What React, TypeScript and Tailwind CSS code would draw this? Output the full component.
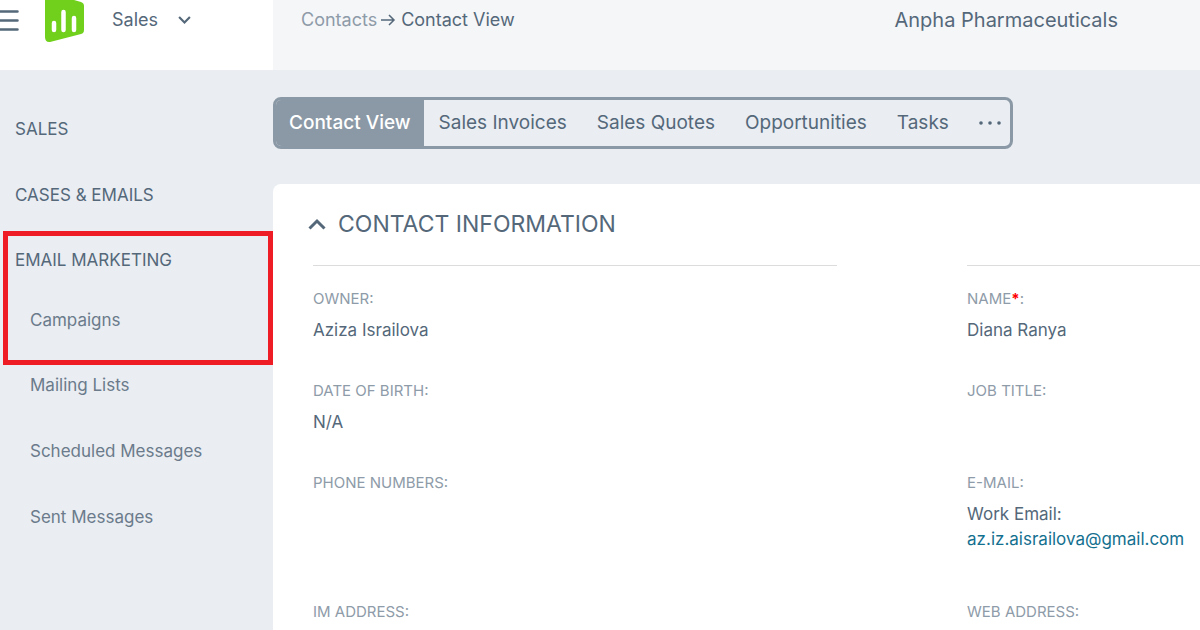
import React from 'react';

interface Field {
    label: string;
    required?: boolean;
    value?: React.ReactNode;
}

const topLinks = ['Sales', 'Cases & Emails'];
const mailLinks = ['Mailing Lists', 'Scheduled Messages', 'Sent Messages'];
const tabs = ['Sales Invoices', 'Sales Quotes', 'Opportunities', 'Tasks'];

const fields: Field[] = [
    { label: 'Owner', value: 'Aziza Israilova' },
    { label: 'Name', required: true, value: 'Diana Ranya' },
    { label: 'Date of birth', value: 'N/A' },
    { label: 'Job title' },
    { label: 'Phone numbers' },
    {
        label: 'E-mail',
        value: (
            <div className="pb-3">
                Work Email:
                <br />
                <a href="mailto:az.iz.aisrailova@gmail.com" className="text-[#14708f] hover:underline">
                    az.iz.aisrailova@gmail.com
                </a>
            </div>
        ),
    },
    { label: 'IM address' },
    { label: 'Web address' },
];

const Logo = () => (
    <svg width="39" height="42" viewBox="0 0 39 42" aria-hidden="true">
        <path
            d="M0 0H29L36 2Q39 3 39 6V30Q39 33 36 34L6 41.8Q0 43 0 37Z"
            fill="#70d01b"
        />
        <path d="M9 23V30M18.500 12V30M29 18V30" stroke="#fff" strokeWidth="4.500" strokeLinecap="round" />
    </svg>
);

const Chevron = ({ className, width }: { className?: string; width: number }) => (
    <svg
        width={width}
        viewBox="0 0 18 12"
        fill="none"
        stroke="currentColor"
        strokeWidth="3"
        className={className}
        aria-hidden="true"
    >
        <path d="M1.500 10.500L9 3L16.500 10.500" />
    </svg>
);

const Header = () => (
    <header className="flex h-[70px] bg-[#f5f6f8] text-lg leading-6">
        <div className="flex w-[273px] shrink-0 items-start bg-white">
            <button type="button" aria-label="Menu" className="mt-2 h-6">
                <svg width="19" height="24" viewBox="0 0 19 24" stroke="currentColor" strokeWidth="2.500" strokeLinecap="round">
                    <path d="M-2 3.500H17.500M-2 12.500H17.500M-2 21.500H17.500" />
                </svg>
            </button>
            <a href="#" aria-label="Home" className="ml-[26px]">
                <Logo />
            </a>
            <button type="button" className="ml-7 mt-2 flex items-center gap-5">
                Sales
                <Chevron width={13} className="rotate-180" />
            </button>
        </div>
        <div className="flex grow items-start justify-between pl-7 pr-[82px] pt-2">
            <nav className="flex items-center gap-1">
                <a href="#" className="text-[#8e9ba8]">Contacts</a>
                <svg width="16" height="14" viewBox="0 0 16 14" fill="none" stroke="currentColor" strokeWidth="1.500" aria-hidden="true">
                    <path d="M0 7H12M8 2L13 7L8 12" />
                </svg>
                <span>Contact View</span>
            </nav>
            <div className="text-xl leading-6">Anpha Pharmaceuticals</div>
        </div>
    </header>
);

const Sidebar = () => (
    <nav className="w-[273px] shrink-0 pt-[27px]">
        {topLinks.map((link) => (
            <a key={link} href="#" className="flex h-[66px] items-center pl-[15px] uppercase">
                {link}
            </a>
        ))}
        <div className="ml-[3px] mt-[2px] border-5 border-[#ee1c25] pb-1">
            <a href="#" className="flex h-[50px] items-center pl-[7px] uppercase">Email Marketing</a>
            <a href="#" className="flex h-[70px] items-center pl-[22px] text-[#6b7b8b]">Campaigns</a>
        </div>
        <div className="flex flex-col gap-6 pl-[30px] text-[#6b7b8b]">
            {mailLinks.map((link) => (
                <a key={link} href="#" className="flex h-[42px] items-center">
                    {link}
                </a>
            ))}
        </div>
    </nav>
);

const Tabs = () => (
    <div className="flex h-[52px] w-fit items-stretch overflow-hidden rounded-lg border-3 border-[#8b99a6] text-[19px]">
        <button type="button" className="bg-[#8b99a6] px-[13px] font-medium text-white">Contact View</button>
        {tabs.map((tab) => (
            <button key={tab} type="button" className="px-[15px]">
                {tab}
            </button>
        ))}
        <button type="button" aria-label="More" className="pl-[15px] pr-[9px]">
            <svg width="22" height="4" viewBox="0 0 22 4" fill="currentColor">
                <circle cx="2" cy="2" r="1.800" />
                <circle cx="11" cy="2" r="1.800" />
                <circle cx="20" cy="2" r="1.800" />
            </svg>
        </button>
    </div>
);

const FieldItem: React.FC<{ field: Field }> = ({ field }) => (
    <div className="min-w-0">
        <dt className="text-[15px] uppercase leading-6 text-[#8e9ba8]">
            {field.label}
            {field.required && <span className="font-bold text-[#ff0000]">*</span>}:
        </dt>
        <dd className="mt-[7px] min-h-[25px] leading-[25px]">{field.value}</dd>
    </div>
);

const App = () => (
    <div className="flex min-h-screen flex-col overflow-x-hidden bg-[#eaedf2] font-['Inter',sans-serif] text-[17px] text-[#54687a]">
        <Header />
        <div className="flex grow">
            <Sidebar />
            <main className="flex min-w-0 grow flex-col pt-[27px]">
                <Tabs />
                <section className="mt-[35px] h-[446px] grow overflow-hidden rounded-tl-lg bg-white pl-10 pt-6">
                    <h2 className="-ml-[5px] text-[23px] leading-8">
                        <button type="button" className="flex items-center gap-3">
                            <Chevron width={18} />
                            CONTACT INFORMATION
                        </button>
                    </h2>
                    <div className="mt-[25px] grid grid-cols-[9fr_4fr] gap-x-[130px]">
                        <hr className="border-[#dcdcdc]" />
                        <hr className="border-[#dcdcdc]" />
                    </div>
                    <dl className="mt-[21px] grid grid-cols-[9fr_4fr] gap-x-[130px] gap-y-9">
                        {fields.map((field) => (
                            <FieldItem key={field.label} field={field} />
                        ))}
                    </dl>
                </section>
            </main>
        </div>
    </div>
);

export default App;
